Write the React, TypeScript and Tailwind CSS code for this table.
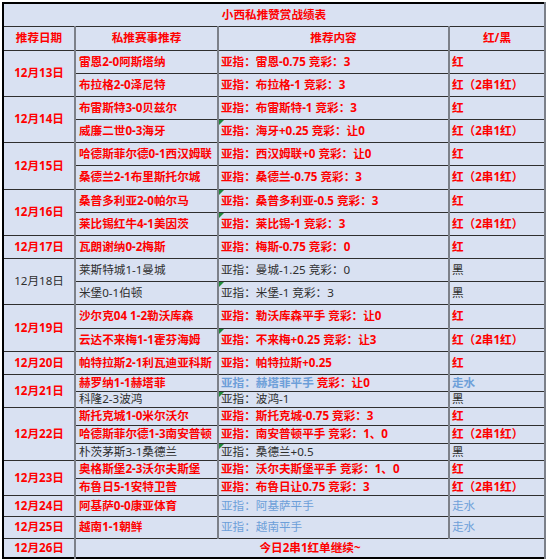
import React from 'react';

type Tone = 'red' | 'dark' | 'blue' | 'blueN';
type Part = [string, Tone];

type Row = {
  h: number;
  match: Part;
  tip: Part[];
  res: Part;
  mark?: boolean; // green excel marker
};

type Group = { date: string; tone: Tone; rows: Row[] };

const toneCls: Record<Tone, string> = {
  red: 'text-[#ff0000] font-bold',
  dark: 'text-[#2e2e2e] font-normal',
  blue: 'text-[#6d9fd9] font-bold',
  blueN: 'text-[#6d9fd9] font-normal',
};

const groups: Group[] = [
  {
    date: '12月13日', tone: 'red', rows: [
      { h: 23, match: ['雷恩2-0阿斯塔纳', 'red'], tip: [['亚指：雷恩-0.75 竞彩：3', 'red']], res: ['红', 'red'] },
      { h: 23, match: ['布拉格2-0泽尼特', 'red'], tip: [['亚指：布拉格-1 竞彩：3', 'red']], res: ['红（2串1红）', 'red'] },
    ],
  },
  {
    date: '12月14日', tone: 'red', rows: [
      { h: 23, match: ['布雷斯特3-0贝兹尔', 'red'], tip: [['亚指：布雷斯特-1 竞彩：3', 'red']], res: ['红', 'red'] },
      { h: 23, match: ['威廉二世0-3海牙', 'red'], tip: [['亚指：海牙+0.25 竞彩：让0', 'red']], res: ['红（2串1红）', 'red'], mark: true },
    ],
  },
  {
    date: '12月15日', tone: 'red', rows: [
      { h: 23, match: ['哈德斯菲尔德0-1西汉姆联', 'red'], tip: [['亚指：西汉姆联+0 竞彩：让0', 'red']], res: ['红', 'red'] },
      { h: 24, match: ['桑德兰2-1布里斯托尔城', 'red'], tip: [['亚指：桑德兰-0.75 竞彩：3', 'red']], res: ['红（2串1红）', 'red'] },
    ],
  },
  {
    date: '12月16日', tone: 'red', rows: [
      { h: 23, match: ['桑普多利亚2-0帕尔马', 'red'], tip: [['亚指：桑普多利亚-0.5 竞彩：3', 'red']], res: ['红', 'red'], mark: true },
      { h: 23, match: ['莱比锡红牛4-1美因茨', 'red'], tip: [['亚指：莱比锡-1 竞彩：3', 'red']], res: ['红（2串1红）', 'red'], mark: true },
    ],
  },
  {
    date: '12月17日', tone: 'red', rows: [
      { h: 23, match: ['瓦朗谢纳0-2梅斯', 'red'], tip: [['亚指：梅斯-0.75 竞彩：0', 'red']], res: ['红', 'red'] },
    ],
  },
  {
    date: '12月18日', tone: 'dark', rows: [
      { h: 23, match: ['莱斯特城1-1曼城', 'dark'], tip: [['亚指：曼城-1.25 竞彩：0', 'dark']], res: ['黑', 'dark'] },
      { h: 23, match: ['米堡0-1伯顿', 'dark'], tip: [['亚指：米堡-1 竞彩：3', 'dark']], res: ['黑', 'dark'], mark: true },
    ],
  },
  {
    date: '12月19日', tone: 'red', rows: [
      { h: 24, match: ['沙尔克04 1-2勒沃库森', 'red'], tip: [['亚指：勒沃库森平手 竞彩：让0', 'red']], res: ['红', 'red'] },
      { h: 23, match: ['云达不来梅1-1霍芬海姆', 'red'], tip: [['亚指：不来梅+0.25 竞彩：让3', 'red']], res: ['红（2串1红）', 'red'], mark: true },
    ],
  },
  {
    date: '12月20日', tone: 'red', rows: [
      { h: 23, match: ['帕特拉斯2-1利瓦迪亚科斯', 'red'], tip: [['亚指：帕特拉斯+0.25', 'red']], res: ['红', 'red'] },
    ],
  },
  {
    date: '12月21日', tone: 'red', rows: [
      { h: 17, match: ['赫罗纳1-1赫塔菲', 'red'], tip: [['亚指：赫塔菲平手', 'blue'], [' 竞彩：让0', 'red']], res: ['走水', 'blue'] },
      { h: 16, match: ['科隆2-3波鸿', 'dark'], tip: [['亚指：波鸿-1', 'dark']], res: ['黑', 'dark'], mark: true },
    ],
  },
  {
    date: '12月22日', tone: 'red', rows: [
      { h: 18, match: ['斯托克城1-0米尔沃尔', 'red'], tip: [['亚指：斯托克城-0.75 竞彩：3', 'red']], res: ['红', 'red'] },
      { h: 18, match: ['哈德斯菲尔德1-3南安普顿', 'red'], tip: [['亚指：南安普顿平手 竞彩：1、0', 'red']], res: ['红（2串1红）', 'red'] },
      { h: 17, match: ['朴茨茅斯3-1桑德兰', 'dark'], tip: [['亚指：桑德兰+0.5', 'dark']], res: ['黑', 'dark'], mark: true },
    ],
  },
  {
    date: '12月23日', tone: 'red', rows: [
      { h: 18, match: ['奥格斯堡2-3沃尔夫斯堡', 'red'], tip: [['亚指：沃尔夫斯堡平手 竞彩：1、0', 'red']], res: ['红', 'red'] },
      { h: 17, match: ['布鲁日5-1安特卫普', 'red'], tip: [['亚指：布鲁日让0.75 竞彩：3', 'red']], res: ['红（2串1红）', 'red'] },
    ],
  },
  {
    date: '12月24日', tone: 'red', rows: [
      { h: 21, match: ['阿基萨0-0康亚体育', 'red'], tip: [['亚指：阿基萨平手', 'blueN']], res: ['走水', 'blueN'] },
    ],
  },
  {
    date: '12月25日', tone: 'red', rows: [
      { h: 22, match: ['越南1-1朝鲜', 'red'], tip: [['亚指：越南平手', 'blueN']], res: ['走水', 'blueN'] },
    ],
  },
];

const cell = 'border-r-2 border-r-[#7c8089] border-b border-b-[#2f2f2f] p-0 align-middle';

export default function App() {
  return (
    <div className="min-h-screen bg-white pl-[2px] pt-[2px] font-['Noto_Sans','Noto_Sans_CJK_SC',sans-serif] text-[11.6px] leading-[14px]">
      <table className="w-[542px] table-fixed border-collapse border-2 border-black bg-[#d9e1f2]">
        <colgroup>
          <col className="w-[72px]" />
          <col className="w-[143px]" />
          <col className="w-[231px]" />
          <col className="w-[96px]" />
        </colgroup>
        <tbody>
          <tr className="h-[23px]">
            <td colSpan={4} className={`${cell} text-center ${toneCls.red}`}>小西私推赞赏战绩表</td>
          </tr>
          <tr className="h-[24px]">
            <td className={`${cell} text-center ${toneCls.red}`}>推荐日期</td>
            <td className={`${cell} text-center ${toneCls.red}`}>私推赛事推荐</td>
            <td className={`${cell} text-center ${toneCls.red}`}>推荐内容</td>
            <td className={`${cell} text-center ${toneCls.red}`}>红/黑</td>
          </tr>
          {groups.map((g) =>
            g.rows.map((r, i) => (
              <tr key={g.date + i} style={{ height: r.h }}>
                {i === 0 && (
                  <td rowSpan={g.rows.length} className={`${cell} border-b-[#1f1f1f] text-center ${toneCls[g.tone]}`}>
                    {g.date}
                  </td>
                )}
                <td className={`${cell} pl-[3px] whitespace-nowrap ${toneCls[r.match[1]]}`}>{r.match[0]}</td>
                <td className={`${cell} relative pl-[2px] whitespace-nowrap`}>
                  {r.mark && (
                    <span className="absolute left-0 top-0 h-0 w-0 border-t-[5px] border-r-[5px] border-t-[#1f8a3b] border-r-transparent" />
                  )}
                  {r.tip.map((p, k) => (
                    <span key={k} className={toneCls[p[1]]}>{p[0]}</span>
                  ))}
                </td>
                <td className={`${cell} pl-[2px] whitespace-nowrap ${toneCls[r.res[1]]}`}>{r.res[0]}</td>
              </tr>
            ))
          )}
          <tr className="h-[20px]">
            <td className={`${cell} text-center ${toneCls.red}`}>12月26日</td>
            <td colSpan={3} className={`${cell} text-center ${toneCls.red}`}>今日2串1红单继续~</td>
          </tr>
        </tbody>
      </table>
    </div>
  );
}
